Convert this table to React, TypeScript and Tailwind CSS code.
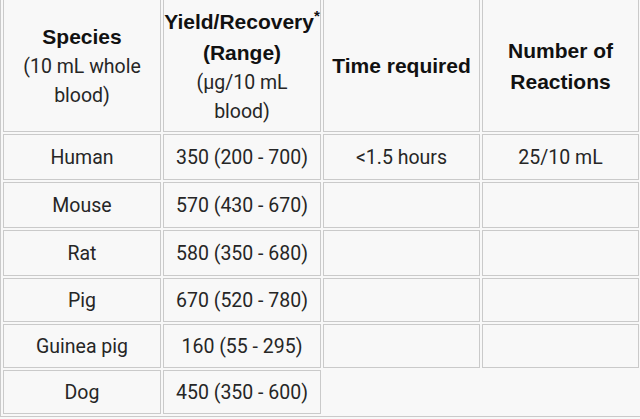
const rows: { species: string; yield: string; time?: string; reactions?: string; short?: boolean }[] = [
  { species: 'Human', yield: '350 (200 - 700)', time: '<1.5 hours', reactions: '25/10 mL' },
  { species: 'Mouse', yield: '570 (430 - 670)', time: '', reactions: '' },
  { species: 'Rat', yield: '580 (350 - 680)', time: '', reactions: '' },
  { species: 'Pig', yield: '670 (520 - 780)', time: '', reactions: '' },
  { species: 'Guinea pig', yield: '160 (55 - 295)', time: '', reactions: '' },
  { species: 'Dog', yield: '450 (350 - 600)', short: true },
];

const heights = ['h-[46px]', 'h-[46px]', 'h-[46px]', 'h-[44px]', 'h-[44px]', 'h-[44px]'];

const cell = 'border border-[#cacaca] p-0 text-center align-middle';
const bold = "font-['Liberation_Sans',Arial,sans-serif] text-[21px] font-bold leading-[31px] text-[#111]";
const plain = 'text-[19.5px] leading-[29px] text-[#262626]';

export default function App() {
  return (
    <div className="h-[419px] w-[640px] overflow-hidden bg-[#f8f8f8] font-['Roboto',sans-serif]">
      <table className="-mt-[4px] w-[642px] table-fixed border-separate border-spacing-[2px] border border-[#cacaca]">
        <colgroup>
          <col className="w-[158px]" />
          <col className="w-[158px]" />
          <col className="w-[157px]" />
          <col className="w-[157px]" />
        </colgroup>
        <thead>
          <tr>
            <th className={`${cell} h-[133px] font-normal`}>
              <div className={bold}>Species</div>
              <div className={plain}>(10 mL whole</div>
              <div className={plain}>blood)</div>
            </th>
            <th className={`${cell} h-[133px] font-normal`}>
              <div className={`${bold} whitespace-nowrap`}>
                Yield/Recovery<span className="align-top text-[15px] leading-[20px]">*</span>
              </div>
              <div className={bold}>(Range)</div>
              <div className={plain}>(µg/10 mL</div>
              <div className={plain}>blood)</div>
            </th>
            <th className={`${cell} h-[133px] font-normal`}>
              <div className={bold}>Time required</div>
            </th>
            <th className={`${cell} h-[133px] font-normal`}>
              <div className={bold}>Number of</div>
              <div className={bold}>Reactions</div>
            </th>
          </tr>
        </thead>
        <tbody>
          {rows.map((r, i) => (
            <tr key={r.species}>
              <td className={`${cell} ${heights[i]} ${plain}`}>{r.species}</td>
              <td className={`${cell} ${heights[i]} ${plain}`}>{r.yield}</td>
              {!r.short && <td className={`${cell} ${heights[i]} ${plain}`}>{r.time}</td>}
              {!r.short && <td className={`${cell} ${heights[i]} ${plain}`}>{r.reactions}</td>}
            </tr>
          ))}
        </tbody>
      </table>
    </div>
  );
}
